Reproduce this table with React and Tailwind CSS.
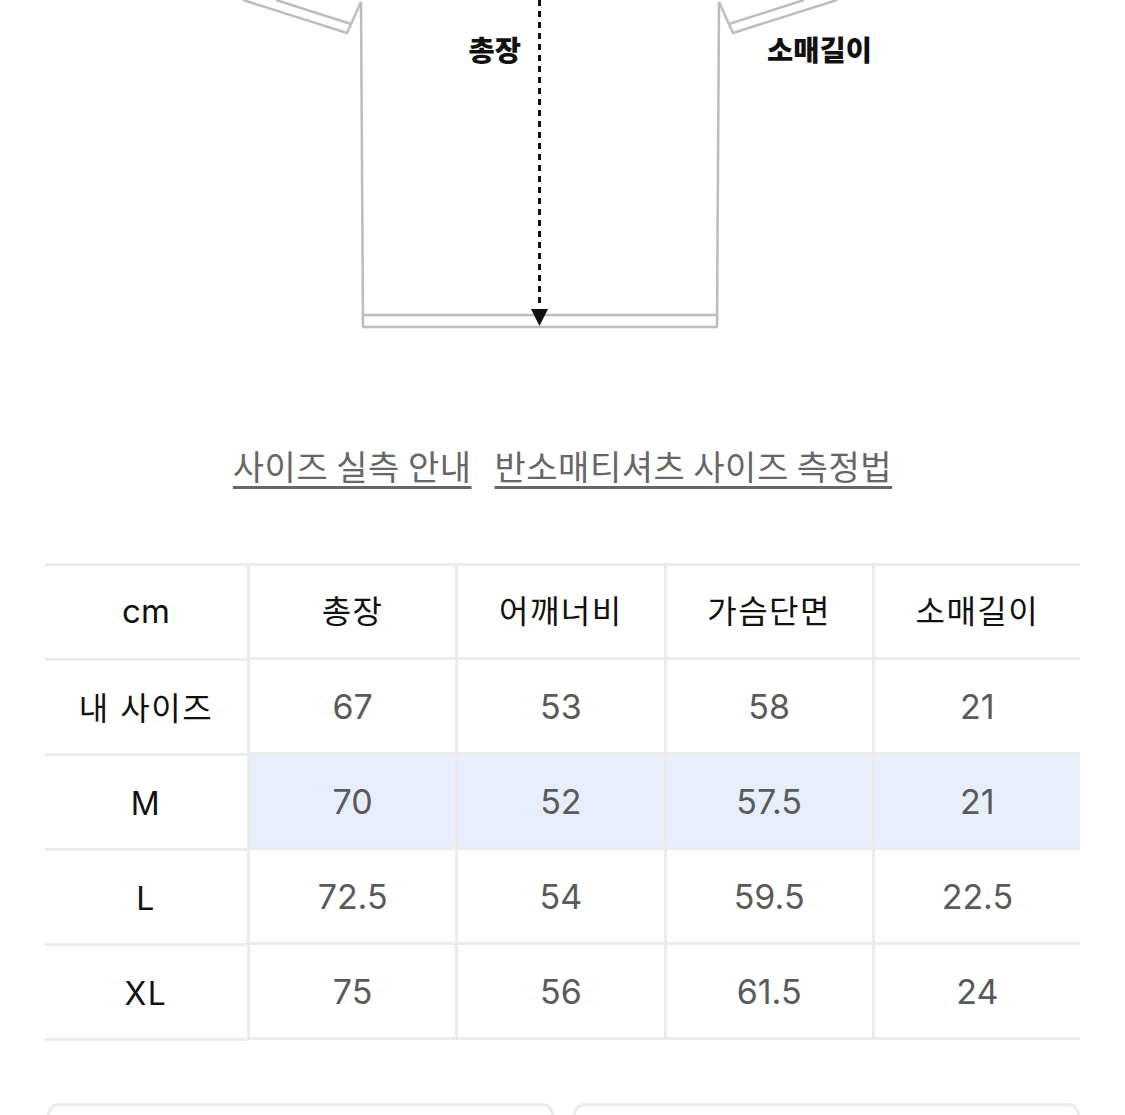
import React from 'react';

const font = { fontFamily: '"Noto Sans CJK KR", "Noto Sans", sans-serif' };
const latin = { fontFamily: 'Inter, "Noto Sans CJK KR", sans-serif' };

const columns = ['총장', '어깨너비', '가슴단면', '소매길이'];
const rows = [
  { label: '내 사이즈', values: ['67', '53', '58', '21'] },
  { label: 'M', values: ['70', '52', '57.5', '21'], active: true },
  { label: 'L', values: ['72.5', '54', '59.5', '22.5'] },
  { label: 'XL', values: ['75', '56', '61.5', '24'] },
];

const ShirtDiagram = () => (
  <svg viewBox="0 0 1125 340" width="1125" height="340" className="block">
    <g fill="none" stroke="#bdbdbd" strokeWidth="2.5" strokeLinejoin="round">
      {/* 몸판 */}
      <path d="M361 2 L363 327 L717 327 L719 2" />
      <path d="M363 315 L717 315" />
      {/* 왼쪽 소매 */}
      <path d="M243 0 L347 33 L361 2" />
      <path d="M276 0 L351 24" />
      {/* 오른쪽 소매 */}
      <path d="M837 0 L733 33 L719 2" />
      <path d="M804 0 L729 24" />
    </g>
    <path d="M539.5 0 L539.5 308" stroke="#111" strokeWidth="3" strokeDasharray="6 5" />
    <path d="M531 309 L548 309 L539.5 326 Z" fill="#111" />
    <text x="521" y="61" textAnchor="end" fontSize="28.5" fontWeight="900" fill="#111" style={font}>
      총장
    </text>
    <text x="767" y="61" fontSize="28.5" fontWeight="900" fill="#111" style={font}>
      소매길이
    </text>
  </svg>
);

export default function App() {
  return (
    <div className="bg-white w-[1125px] h-[1115px] overflow-hidden" style={font}>
      <ShirtDiagram />

      {/* 안내 링크 */}
      <div className="flex justify-center gap-[23px] mt-[103px]">
        <a className="text-[34px] leading-[46px] tracking-[0.5px] text-[#666] underline decoration-[3px] underline-offset-[6px]">
          사이즈 실측 안내
        </a>
        <a className="text-[34px] leading-[46px] tracking-[0.5px] text-[#666] underline decoration-[3px] underline-offset-[6px]">
          반소매티셔츠 사이즈 측정법
        </a>
      </div>

      {/* 사이즈 표 */}
      <div className="flex mt-[74px] ml-[45px] w-[1035px] items-start">
        <div className="w-[202px] shrink-0 border-t-[3px] border-[#ebebeb]">
          <div className="h-[95px] border-b-[3px] border-[#ebebeb] flex items-center justify-center text-[33px] text-[#111]">
            <span style={latin}>cm</span>
          </div>
          {rows.map((r) => (
            <div
              key={r.label}
              className="h-[95px] border-b-[3px] border-[#ebebeb] flex items-center justify-center pt-[4px] text-[32px] tracking-[1.5px] text-[#111]"
            >
              <span style={latin}>{r.label}</span>
            </div>
          ))}
        </div>

        <div className="flex-1 border-t-[3px] border-[#ebebeb]">
          <div className="grid grid-cols-4 h-[94px] border-b-[3px] border-[#ebebeb]">
            {columns.map((c) => (
              <div
                key={c}
                className="border-l-[3px] border-[#ebebeb] flex items-center justify-center text-[32px] tracking-[1.5px] text-[#111] pb-[6px]"
              >
                {c}
              </div>
            ))}
          </div>
          {rows.map((r) => (
            <div
              key={r.label}
              className={`grid grid-cols-4 h-[95px] border-b-[3px] border-[#ebebeb] ${
                r.active ? 'bg-[#e8effc]' : ''
              }`}
            >
              {r.values.map((v, i) => (
                <div
                  key={i}
                  className="border-l-[3px] border-[#ebebeb] flex items-center justify-center text-[34px] text-[#5a5a5a]"
                  style={{ fontFamily: 'Inter, "Liberation Sans", sans-serif' }}
                >
                  {v}
                </div>
              ))}
            </div>
          ))}
        </div>
      </div>

      {/* 하단 버튼 */}
      <div className="flex gap-[19px] mt-[62px] ml-[47px] w-[1033px]">
        <div className="flex-1 h-[60px] rounded-[12px] border-[3px] border-[#ebebeb]" />
        <div className="flex-1 h-[60px] rounded-[12px] border-[3px] border-[#ebebeb]" />
      </div>
    </div>
  );
}
